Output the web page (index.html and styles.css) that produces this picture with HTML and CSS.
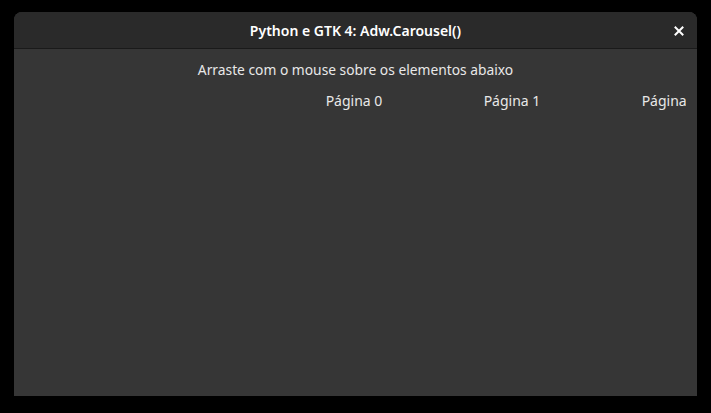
FILE: index.html
```html
<!DOCTYPE html>
<html lang="pt">
<head>
<meta charset="utf-8">
<link rel="stylesheet" href="styles.css">
</head>
<body>
<div class="window">
  <header class="headerbar">
    <div class="title">Python e GTK 4: Adw.Carousel()</div>
    <button class="close" aria-label="Fechar">
      <svg width="10" height="10" viewBox="0 0 10 10"><path d="M1.5 1.5 L8.5 8.5 M8.5 1.5 L1.5 8.5" stroke="#ffffff" stroke-width="2" stroke-linecap="square"/></svg>
    </button>
  </header>
  <main class="content">
    <div class="hint">Arraste com o mouse sobre os elementos abaixo</div>
    <div class="carousel">
      <div class="page">Página 0</div>
      <div class="page">Página 1</div>
      <div class="page">Página 2</div>
    </div>
  </main>
</div>
</body>
</html>
```
FILE: styles.css
```css
html, body {
  margin: 0;
  padding: 0;
  background: #000000;
  width: 711px;
  height: 413px;
  overflow: hidden;
}
body {
  padding: 12px 14px 17px 14px;
  box-sizing: border-box;
  font-family: "Noto Sans", "Open Sans", sans-serif;
}
.window {
  width: 683px;
  height: 384px;
  display: flex;
  flex-direction: column;
  background: #363636;
  border-radius: 8px 8px 0 0;
  overflow: hidden;
}
.headerbar {
  height: 36px;
  flex-shrink: 0;
  background: #2a2a2a;
  border-bottom: 1px solid #1a1a1a;
  display: flex;
  align-items: center;
  justify-content: center;
  position: relative;
}
.title {
  color: #ffffff;
  font-weight: 600;
  font-size: 14px;
}
.close {
  position: absolute;
  right: 12px;
  top: 13px;
  width: 12px;
  height: 12px;
  padding: 0;
  border: 0;
  background: transparent;
  display: flex;
  align-items: center;
  justify-content: center;
}
.content {
  flex: 1;
  display: flex;
  flex-direction: column;
  align-items: stretch;
  color: #e8e8e8;
  font-size: 14px;
}
.hint {
  text-align: center;
  margin-top: 12px;
  line-height: 18px;
  font-size: 13.8px;
}
.carousel {
  margin: 11px 11px 0 261px;
  display: flex;
  overflow: hidden;
  line-height: 22px;
}
.page {
  flex: 0 0 158px;
  text-align: center;
}
```
